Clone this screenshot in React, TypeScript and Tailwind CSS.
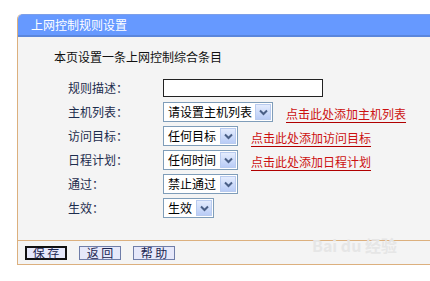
import React from "react";

const font = { fontFamily: '"Noto Sans CJK SC", "Noto Sans", sans-serif' };

function Arrow() {
  return (
    <div className="flex h-[16px] w-[16px] shrink-0 items-center justify-center border border-[#b9cbef] bg-gradient-to-b from-[#e4ecfd] to-[#b9ccf6]">
      <svg width="9" height="7" viewBox="0 0 9 7">
        <path d="M1 1.5 L4.5 5 L8 1.5" fill="none" stroke="#4a5f86" strokeWidth="2" />
      </svg>
    </div>
  );
}

function Select({ text, w }: { text: string; w: string }) {
  return (
    <div className={`flex h-[20px] shrink-0 items-center justify-between border border-[#7f9db9] bg-white pl-[4px] pr-[1px] ${w}`}>
      <span className="text-[12px] leading-none text-black whitespace-nowrap">{text}</span>
      <Arrow />
    </div>
  );
}

function Link({ text }: { text: string }) {
  return (
    <span className="text-[12px] leading-none text-[#cc1010] underline decoration-[#b00000] underline-offset-[3px] whitespace-nowrap">
      {text}
    </span>
  );
}

function Row({ label, children }: { label: string; children: React.ReactNode }) {
  return (
    <div className="flex h-[24px] items-center">
      <div className="w-[145px] shrink-0 pl-[50px] text-[12px] text-[#1d2c4d] whitespace-nowrap">{label}</div>
      <div className="flex items-center">{children}</div>
    </div>
  );
}

function Btn({ text, active }: { text: string; active?: boolean }) {
  return (
    <div
      className={`flex h-[14px] w-[42px] items-center justify-center bg-[#e6e8fa] text-[12px] leading-none text-[#1b2550] ${
        active ? "border-2 border-[#111]" : "border border-[#6f7da8]"
      }`}
    >
      {text}
    </div>
  );
}

export default function App() {
  return (
    <div className="relative h-[281px] w-[430px] overflow-hidden bg-white" style={font}>
      <div className="pt-[14px] pl-[17px]">
        <div className="w-[413px] border-l border-[#dcb07e] rounded-tl-[5px]">
          <div className="flex h-[23px] items-center rounded-tl-[5px] border-t border-b-2 border-t-[#7d9fe8] border-b-[#5a86dc] bg-[#6699ff] pl-[13px] text-[12px] text-white">
            上网控制规则设置
          </div>
          <div className="bg-[#f4f4f4] pt-[12px] pb-[20px]">
            <div className="h-[16px] pl-[36px] text-[12px] leading-[16px] text-[#111]">本页设置一条上网控制综合条目</div>
            <div className="mt-[11px] flex flex-col">
              <Row label="规则描述：">
                <div className="h-[18px] w-[160px] border border-[#222] bg-white" />
              </Row>
              <Row label="主机列表：">
                <Select text="请设置主机列表" w="w-[110px]" />
                <span className="ml-[13px]"><Link text="点击此处添加主机列表" /></span>
              </Row>
              <Row label="访问目标：">
                <Select text="任何目标" w="w-[75px]" />
                <span className="ml-[13px]"><Link text="点击此处添加访问目标" /></span>
              </Row>
              <Row label="日程计划：">
                <Select text="任何时间" w="w-[75px]" />
                <span className="ml-[13px]"><Link text="点击此处添加日程计划" /></span>
              </Row>
              <Row label="通过：">
                <Select text="禁止通过" w="w-[75px]" />
              </Row>
              <Row label="生效：">
                <Select text="生效" w="w-[51px]" />
              </Row>
            </div>
          </div>
          <div className="flex h-[25px] items-center gap-[12px] border-t border-b border-[#dcb07e] bg-[#f4f4f4] pl-[7px]">
            <Btn text="保 存" active />
            <Btn text="返 回" />
            <Btn text="帮 助" />
          </div>
        </div>
      </div>
      <div className="pointer-events-none absolute left-[312px] top-[236px] text-[16px] font-bold leading-[18px] text-[#e6e6e6]">
        Bai du 经验
      </div>
    </div>
  );
}
